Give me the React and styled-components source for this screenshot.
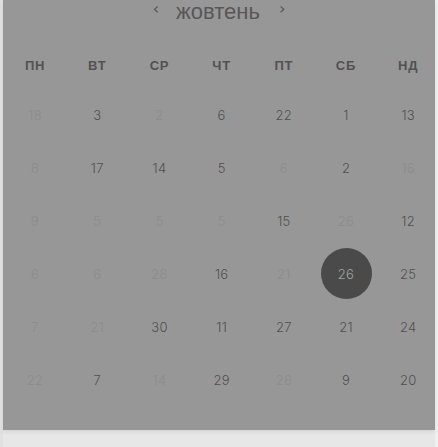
import React from "react";
import styled, { createGlobalStyle } from "styled-components";

const Global = createGlobalStyle`
  html, body { margin: 0; padding: 0; background: #e6e6e6; }
  body { font-family: "Liberation Sans", Arial, sans-serif; }
`;

const Page = styled.div`
  width: 438px;
  height: 447px;
  background: linear-gradient(to right, #e1e1e1 0, #e1e1e1 3px, #e7e7e7 3px, #e7e7e7 435px, #f0f0f0 435px);
  display: flex;
  align-items: flex-start;
`;

const Panel = styled.div`
  margin-left: 3px;
  width: 432px;
  height: 430px;
  background: #979797;
  box-shadow: 0 2px 4px rgba(0, 0, 0, 0.08);
  display: flex;
  flex-direction: column;
  padding-bottom: 24px;
  box-sizing: border-box;
`;

const Header = styled.div`
  height: 24px;
  display: flex;
  align-items: center;
  justify-content: center;
  gap: 17px;
  color: #555;
`;

const Arrow = styled.span`
  font-family: "DejaVu Sans", sans-serif;
  font-size: 16px;
  line-height: 1;
  color: #555;
  margin-top: -6px;
`;

const Month = styled.span`
  font-family: "Liberation Sans", Arial, sans-serif;
  font-size: 22px;
  color: #575757;
  line-height: 24px;
  margin-top: -1px;
  margin-right: 2px;
`;

const WeekRow = styled.div`
  margin-top: 30px;
  height: 22px;
  display: grid;
  grid-template-columns: repeat(7, 62.2px);
  margin-left: 1px;
  align-items: center;
`;

const WeekDay = styled.div`
  text-align: center;
  font-family: "Liberation Sans", Arial, sans-serif;
  font-weight: 700;
  font-size: 13px;
  letter-spacing: 0.8px;
  color: #525252;
`;

const Grid = styled.div`
  margin-top: 12px;
  margin-left: 1px;
  display: grid;
  grid-template-columns: repeat(7, 62.2px);
  grid-auto-rows: 53px;
`;

const Cell = styled.div`
  display: flex;
  align-items: center;
  justify-content: center;
`;

const Day = styled.span`
  font-family: "Inter", sans-serif;
  font-size: 13px;
  font-weight: 300;
  letter-spacing: 0.3px;
  color: ${(p) => (p.$selected ? "#a2a2a2" : p.$faded ? "#8c8c8c" : "#505050")};
  width: 51px;
  height: 51px;
  border-radius: 50%;
  background: ${(p) => (p.$selected ? "#4a4a4a" : "transparent")};
  display: flex;
  align-items: center;
  justify-content: center;
`;

const weekdays = ["ПН", "ВТ", "СР", "ЧТ", "ПТ", "СБ", "НД"];

// f = faded (other month), s = selected
const rows = [
  [["18", "f"], ["3"], ["2", "f"], ["6"], ["22"], ["1"], ["13"]],
  [["8", "f"], ["17"], ["14"], ["5"], ["6", "f"], ["2"], ["16", "f"]],
  [["9", "f"], ["5", "f"], ["5", "f"], ["5", "f"], ["15"], ["26", "f"], ["12"]],
  [["6", "f"], ["6", "f"], ["28", "f"], ["16"], ["21", "f"], ["26", "s"], ["25"]],
  [["7", "f"], ["21", "f"], ["30"], ["11"], ["27"], ["21"], ["24"]],
  [["22", "f"], ["7"], ["14", "f"], ["29"], ["26", "f"], ["9"], ["20"]],
];

export default function App() {
  return (
    <>
      <Global />
      <Page>
        <Panel>
          <Header>
            <Arrow>‹</Arrow>
            <Month>жовтень</Month>
            <Arrow>›</Arrow>
          </Header>
          <WeekRow>
            {weekdays.map((d) => (
              <WeekDay key={d}>{d}</WeekDay>
            ))}
          </WeekRow>
          <Grid>
            {rows.flat().map(([n, m], i) => (
              <Cell key={i}>
                <Day $faded={m === "f"} $selected={m === "s"}>
                  {n}
                </Day>
              </Cell>
            ))}
          </Grid>
        </Panel>
      </Page>
    </>
  );
}
